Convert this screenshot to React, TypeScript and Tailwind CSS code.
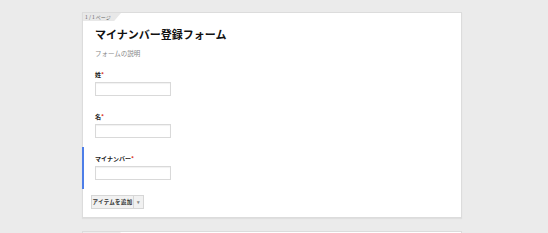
const font = { fontFamily: '"Noto Sans CJK JP", "Noto Sans", sans-serif' };

function Question({ label, active }: { label: string; active?: boolean }) {
  return (
    <div
      className={
        "h-[42px] pt-[8px] pl-[11px] border-l-[2px] " +
        (active ? "border-[#4d7ee8]" : "border-transparent")
      }
    >
      <div className="h-[8px] leading-[8px] text-[6px] font-bold text-[#222]">
        {label}
        <span className="text-[#d93025]">*</span>
      </div>
      <div className="mt-[3px] h-[14px] w-[76px] border border-[#d9d9d9] bg-white shadow-[inset_0_1px_1px_rgba(0,0,0,0.06)]" />
    </div>
  );
}

export default function App() {
  return (
    <div className="h-[233px] w-[548px] overflow-hidden bg-[#ebebeb]" style={font}>
      <div className="h-[12px]" />
      <div className="ml-[82px] w-[380px] h-[206px] border border-[#dcdcdc] bg-white shadow-[0_1px_1px_rgba(0,0,0,0.05)]">
        <div className="h-[8px] w-[38px] bg-[#e8e8e8] [clip-path:polygon(0_0,100%_0,82%_100%,0_100%)] pl-[2px] text-[5px] leading-[8px] text-[#666]">
          1 / 1 ページ
        </div>
        <div className="pl-[12px] pt-[5px]">
          <div className="h-[16px] leading-[16px] text-[11px] font-bold text-[#111]">
            マイナンバー登録フォーム
          </div>
          <div className="mt-[7px] h-[8px] leading-[8px] text-[6.5px] text-[#888]">
            フォームの説明
          </div>
        </div>
        <div className="mt-[6px] -ml-px">
          <Question label="姓" />
          <Question label="名" />
          <Question label="マイナンバー" active />
        </div>
        <div className="mt-[6px] ml-[8px] flex h-[14px] w-[53px] border border-[#d6d6d6] bg-[#f1f1f1] text-[5.5px] font-bold text-[#333]">
          <div className="flex flex-1 items-center justify-center border-r border-[#d6d6d6] tracking-[0.3px]">
            アイテムを追加
          </div>
          <div className="flex w-[9px] items-center justify-center text-[5px] text-[#888]">▾</div>
        </div>
      </div>
      <div className="h-[13px]" />
      <div className="ml-[82px] w-[380px] h-[20px] border border-[#dcdcdc] bg-white">
        <div className="h-[8px] w-[38px] bg-[#eeeeee] [clip-path:polygon(0_0,100%_0,82%_100%,0_100%)]" />
      </div>
    </div>
  );
}
